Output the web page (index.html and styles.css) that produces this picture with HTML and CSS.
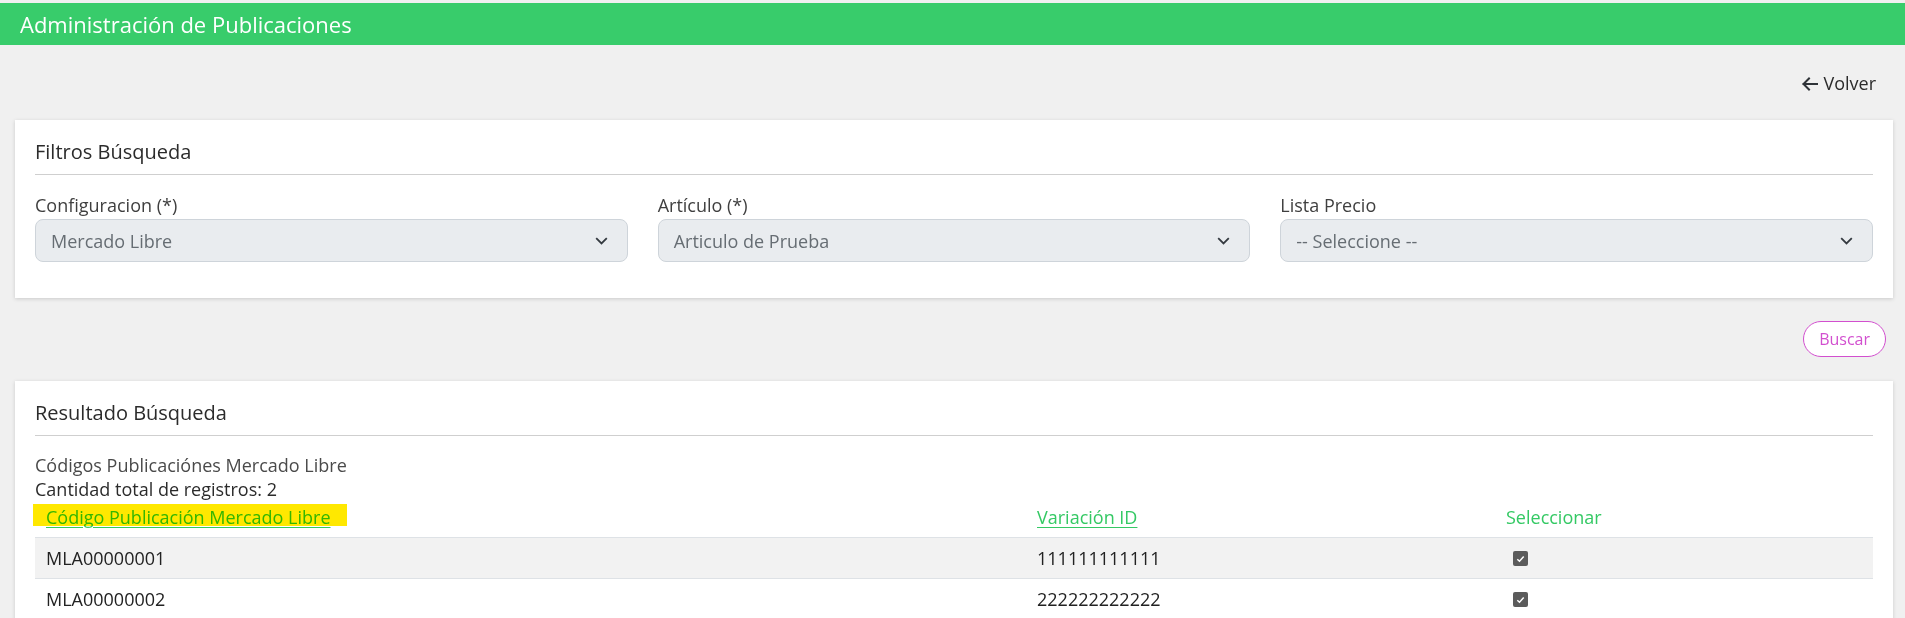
FILE: index.html
```html
<!DOCTYPE html>
<html lang="es">
<head>
<meta charset="utf-8">
<title>Administración de Publicaciones</title>
<link rel="stylesheet" href="styles.css">
</head>
<body>
<div class="topstrip"></div>
<header class="appbar">
  <h1 class="appbar-title">Administración de Publicaciones</h1>
</header>

<div class="back-row">
  <a class="back-link" href="#">
    <svg class="back-icon" width="17" height="14" viewBox="0 0 17 14" aria-hidden="true">
      <path d="M16 7H2.5M8 1.5L2.5 7L8 12.5" fill="none" stroke="#2f3338" stroke-width="2" stroke-linecap="square"/>
    </svg>
    <span>Volver</span>
  </a>
</div>

<section class="card">
  <h2 class="card-title">Filtros Búsqueda</h2>
  <div class="filters">
    <div class="field">
      <label class="field-label">Configuracion (*)</label>
      <div class="select">
        <span class="select-value">Mercado Libre</span>
        <svg class="chev" width="13" height="8" viewBox="0 0 13 8" aria-hidden="true"><path d="M1.2 1.2L6.5 6.5L11.8 1.2" fill="none" stroke="#343a40" stroke-width="1.8"/></svg>
      </div>
    </div>
    <div class="field">
      <label class="field-label">Artículo (*)</label>
      <div class="select">
        <span class="select-value">Articulo de Prueba</span>
        <svg class="chev" width="13" height="8" viewBox="0 0 13 8" aria-hidden="true"><path d="M1.2 1.2L6.5 6.5L11.8 1.2" fill="none" stroke="#343a40" stroke-width="1.8"/></svg>
      </div>
    </div>
    <div class="field">
      <label class="field-label">Lista Precio</label>
      <div class="select">
        <span class="select-value">-- Seleccione --</span>
        <svg class="chev" width="13" height="8" viewBox="0 0 13 8" aria-hidden="true"><path d="M1.2 1.2L6.5 6.5L11.8 1.2" fill="none" stroke="#343a40" stroke-width="1.8"/></svg>
      </div>
    </div>
  </div>
</section>

<div class="actions">
  <button class="btn-buscar" type="button">Buscar</button>
</div>

<section class="card card-results">
  <h2 class="card-title">Resultado Búsqueda</h2>
  <div class="results-sub">Códigos Publicaciónes Mercado Libre</div>
  <div class="results-count">Cantidad total de registros: 2</div>
  <table class="results">
    <colgroup>
      <col class="c1">
      <col class="c2">
      <col class="c3">
    </colgroup>
    <thead>
      <tr>
        <th class="th-mark"><a href="#" class="th-link">Código Publicación Mercado Libre</a><span class="highlight"></span></th>
        <th><a href="#" class="th-link">Variación ID</a></th>
        <th><span class="th-plain">Seleccionar</span></th>
      </tr>
    </thead>
    <tbody>
      <tr class="odd">
        <td>MLA00000001</td>
        <td>111111111111</td>
        <td><span class="chk"><svg width="9" height="8" viewBox="0 0 9 8"><path d="M1.3 4.2L3.5 6.2L7.7 1.6" fill="none" stroke="#fff" stroke-width="1.5"/></svg></span></td>
      </tr>
      <tr>
        <td>MLA00000002</td>
        <td>222222222222</td>
        <td><span class="chk"><svg width="9" height="8" viewBox="0 0 9 8"><path d="M1.3 4.2L3.5 6.2L7.7 1.6" fill="none" stroke="#fff" stroke-width="1.5"/></svg></span></td>
      </tr>
    </tbody>
  </table>
</section>
</body>
</html>
```
FILE: styles.css
```css
* { box-sizing: border-box; }

html, body {
  margin: 0;
  padding: 0;
}

body {
  background: #f0f0f0;
  font-family: "Open Sans", "Noto Sans", "Liberation Sans", sans-serif;
  color: #333;
  overflow: hidden;
}

.topstrip {
  height: 3px;
  background: #f0f0f0;
}

.appbar {
  height: 42px;
  background: #38cc6b;
  padding-left: 20px;
  display: flex;
  align-items: center;
}

.appbar-title {
  margin: 0;
  font-size: 22px;
  font-weight: 400;
  line-height: 42px;
  color: #fff;
}

.back-row {
  display: flex;
  justify-content: flex-end;
  padding: 25px 29px 23px 0;
}

.back-link {
  display: flex;
  align-items: center;
  gap: 5px;
  font-size: 18px;
  line-height: 27px;
  color: #2b2b2b;
  text-decoration: none;
}

.back-icon { display: block; }

.card {
  background: #fff;
  margin: 0 12px 0 15px;
  padding: 20px 20px 36px;
  box-shadow: 0 1px 4px rgba(0, 0, 0, 0.16);
}

.card-title {
  margin: 0;
  font-size: 20px;
  font-weight: 500;
  line-height: 24px;
  color: #2b2b2b;
  padding-bottom: 10px;
  border-bottom: 1px solid #cfcfcf;
}

.filters {
  display: grid;
  grid-template-columns: 1fr 1fr 1fr;
  column-gap: 30px;
  margin-top: 17px;
}

.field-label {
  display: block;
  font-size: 18px;
  line-height: 27px;
  font-weight: 500;
  color: #3f3f3f;
}

.select {
  height: 43px;
  background: #e9ecef;
  border: 1px solid #ced4da;
  border-radius: 8px;
  display: flex;
  align-items: center;
  justify-content: space-between;
  padding: 0 19px 0 15px;
}

.select-value {
  font-size: 18px;
  color: #666d73;
}

.chev { display: block; }

.actions {
  display: flex;
  justify-content: flex-end;
  padding: 23px 19px 24px 0;
}

.btn-buscar {
  height: 36px;
  padding: 0 15px;
  border: 1px solid #d24fcf;
  border-radius: 18px;
  background: #fff;
  color: #d24fcf;
  font-family: inherit;
  font-size: 16px;
  line-height: 34px;
}

.card-results {
  padding-bottom: 0;
}

.results-sub {
  margin-top: 17px;
  font-size: 18px;
  line-height: 24px;
  font-weight: 500;
  color: #4a4a4a;
}

.results-count {
  font-size: 18px;
  line-height: 24px;
  color: #2b2b2b;
}

.results {
  width: 100%;
  border-collapse: collapse;
  table-layout: fixed;
  font-size: 18px;
}

.c1 { width: 991px; }
.c2 { width: 469px; }

.results th {
  text-align: left;
  font-weight: 500;
  line-height: 24px;
  padding: 4px 11px 8px;
  border-bottom: 1px solid #dee2e6;
}

.th-mark { position: relative; }

.th-link {
  color: #34c964;
  text-decoration: underline;
  text-underline-offset: 3px;
}

.th-plain { color: #34c964; }

.highlight {
  position: absolute;
  left: -2px;
  top: 3px;
  width: 314px;
  height: 22px;
  background: #ffe800;
  mix-blend-mode: multiply;
}

.results td {
  padding: 7px 11px 6px;
  line-height: 27px;
  color: #222;
  border-bottom: 1px solid #dee2e6;
}

.results tr.odd td { background: #f2f2f2; }

.chk {
  display: inline-block;
  width: 15px;
  height: 15px;
  margin-left: 7px;
  border-radius: 2px;
  background: #5b5b5b;
  vertical-align: middle;
  position: relative;
  top: -2px;
}

.chk svg {
  display: block;
  margin: 4px 0 0 3px;
}
```
